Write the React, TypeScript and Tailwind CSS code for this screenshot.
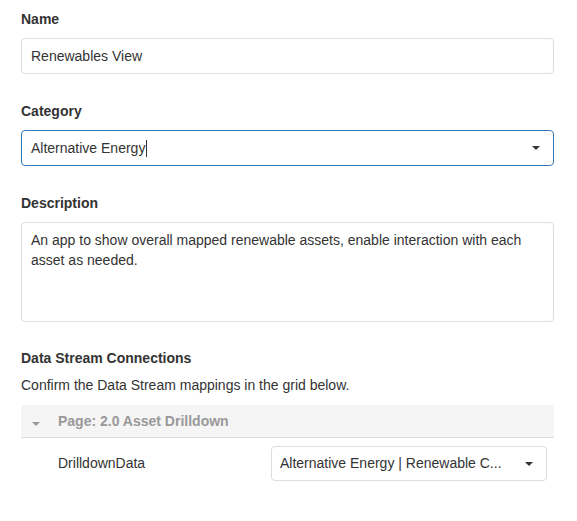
function Caret({ className }: { className?: string }) {
  return (
    <svg width="8" height="4" viewBox="0 0 8 4" className={className}>
      <path d="M0 0 L8 0 L4 4 Z" fill="currentColor" />
    </svg>
  );
}

function Label({ children }: { children: React.ReactNode }) {
  return <div className="text-[14px] leading-[20px] font-bold text-[#333]">{children}</div>;
}

export default function App() {
  return (
    <div className="w-[577px] h-[521px] bg-white font-['Liberation_Sans',Arial,sans-serif] text-[14px] text-[#333] pl-[21px] pr-[23px] pt-[9px]">
      {/* Name */}
      <Label>Name</Label>
      <div className="mt-[9px] h-[36px] border border-[#ddd] rounded-[4px] px-[9px] flex items-center">
        Renewables View
      </div>

      {/* Category */}
      <div className="mt-[27px]">
        <Label>Category</Label>
      </div>
      <div className="mt-[9px] h-[36px] border border-[#337ab7] rounded-[4px] pl-[9px] pr-[13px] flex items-center justify-between">
        <span className="flex items-center">
          Alternative Energy
          <span className="inline-block w-px h-[17px] bg-[#333] ml-[1px]" />
        </span>
        <Caret className="text-[#333]" />
      </div>

      {/* Description */}
      <div className="mt-[27px]">
        <Label>Description</Label>
      </div>
      <div className="mt-[9px] h-[100px] border border-[#ddd] rounded-[4px] px-[9px] pt-[7px] leading-[20px]">
        An app to show overall mapped renewable assets, enable interaction with each asset as needed.
      </div>

      {/* Data Stream Connections */}
      <div className="mt-[26px]">
        <Label>Data Stream Connections</Label>
      </div>
      <div className="mt-[7px] leading-[20px]">Confirm the Data Stream mappings in the grid below.</div>

      <div className="mt-[10px]">
        <div className="h-[33px] bg-[#f5f5f5] border-b border-[#ddd] flex items-center">
          <div className="w-[37px] pl-[11px] pt-[6px]">
            <Caret className="text-[#999]" />
          </div>
          <span className="font-bold text-[#999]">Page: 2.0 Asset Drilldown</span>
        </div>
        <div className="flex items-center pt-[8px]">
          <div className="w-[37px]" />
          <div className="w-[213px]">DrilldownData</div>
          <div className="w-[276px] h-[35px] border border-[#ddd] rounded-[4px] pl-[8px] pr-[13px] flex items-center justify-between">
            <span>Alternative Energy | Renewable C...</span>
            <Caret className="text-[#333]" />
          </div>
        </div>
      </div>
    </div>
  );
}
